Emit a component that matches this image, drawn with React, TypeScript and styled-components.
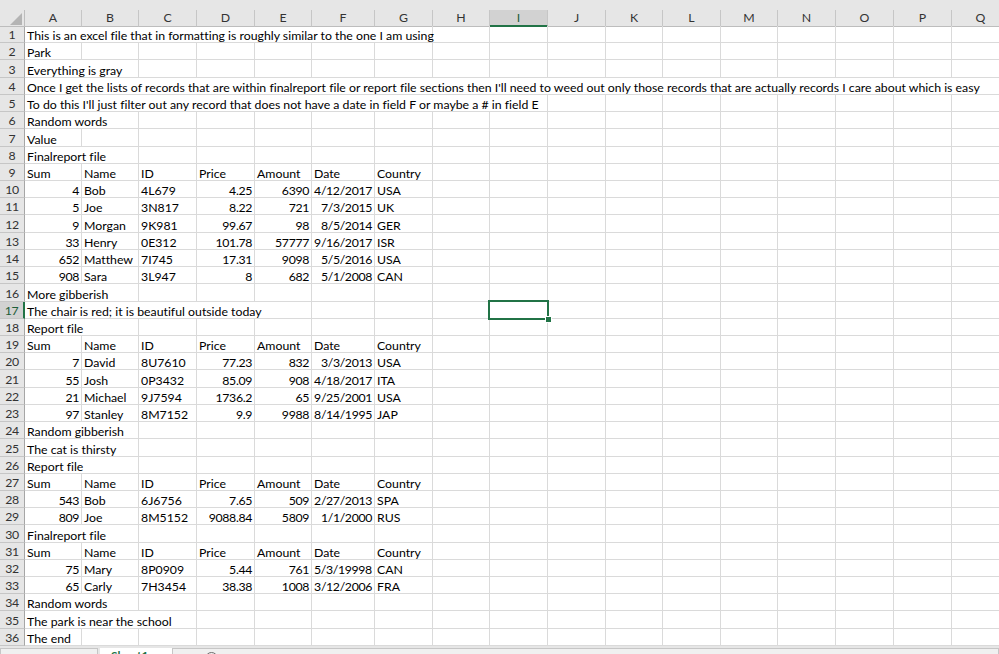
import React from 'react';
import styled, { createGlobalStyle } from 'styled-components';

const COL_W = [57, 57, 58, 58, 57, 63, 58, 57, 58, 58, 57, 58, 57, 58, 58, 58, 58];
const LETTERS = 'ABCDEFGHIJKLMNOPQ'.split('');
const TEMPLATE = `25px ${COL_W.map((w) => `${w}px`).join(' ')}`;
const GRID = '#dadada';
const HEAD_LINE = '#c6c6c6';
const GREEN = '#217346';
const FONT = `Lato, "Noto Sans", sans-serif`;
const ROW_H = 17.22;
const SEL_COL = 8;
const SEL_ROW = 17;

type CellData = { c: number; t: string; r?: boolean; s?: number };

const text = (t: string, s = 1): CellData[] => [{ c: 0, t, s }];
const heads = (): CellData[] =>
  ['Sum', 'Name', 'ID', 'Price', 'Amount', 'Date', 'Country'].map((t, c) => ({ c, t }));
const rec = (
  sum: string,
  name: string,
  id: string,
  price: string,
  amount: string,
  date: string,
  country: string,
  dateIsText = false
): CellData[] => [
  { c: 0, t: sum, r: true },
  { c: 1, t: name },
  { c: 2, t: id },
  { c: 3, t: price, r: true },
  { c: 4, t: amount, r: true },
  { c: 5, t: date, r: !dateIsText },
  { c: 6, t: country },
];

const ROWS: CellData[][] = [
  text('This is an excel file that in formatting is roughly similar to the one I am using', 7),
  text('Park'),
  text('Everything is gray', 2),
  text(
    "Once I get the lists of records that are within finalreport file or report file sections then I'll need to weed out only those records that are actually records I care about which is easy",
    17
  ),
  text("To do this I'll just filter out any record that does not have a date in field F or maybe a # in field E", 9),
  text('Random words', 2),
  text('Value'),
  text('Finalreport file', 2),
  heads(),
  rec('4', 'Bob', '4L679', '4.25', '6390', '4/12/2017', 'USA'),
  rec('5', 'Joe', '3N817', '8.22', '721', '7/3/2015', 'UK'),
  rec('9', 'Morgan', '9K981', '99.67', '98', '8/5/2014', 'GER'),
  rec('33', 'Henry', '0E312', '101.78', '57777', '9/16/2017', 'ISR'),
  rec('652', 'Matthew', '7I745', '17.31', '9098', '5/5/2016', 'USA'),
  rec('908', 'Sara', '3L947', '8', '682', '5/1/2008', 'CAN'),
  text('More gibberish', 2),
  text('The chair is red; it is beautiful outside today', 5),
  text('Report file', 2),
  heads(),
  rec('7', 'David', '8U7610', '77.23', '832', '3/3/2013', 'USA'),
  rec('55', 'Josh', '0P3432', '85.09', '908', '4/18/2017', 'ITA'),
  rec('21', 'Michael', '9J7594', '1736.2', '65', '9/25/2001', 'USA'),
  rec('97', 'Stanley', '8M7152', '9.9', '9988', '8/14/1995', 'JAP'),
  text('Random gibberish', 2),
  text('The cat is thirsty', 2),
  text('Report file', 2),
  heads(),
  rec('543', 'Bob', '6J6756', '7.65', '509', '2/27/2013', 'SPA'),
  rec('809', 'Joe', '8M5152', '9088.84', '5809', '1/1/2000', 'RUS'),
  text('Finalreport file', 2),
  heads(),
  rec('75', 'Mary', '8P0909', '5.44', '761', '5/3/19998', 'CAN', true),
  rec('65', 'Carly', '7H3454', '38.38', '1008', '3/12/2006', 'FRA'),
  text('Random words', 2),
  text('The park is near the school', 3),
  text('The end'),
];

const GlobalStyle = createGlobalStyle`
  html, body { margin: 0; padding: 0; background: #ffffff; overflow: hidden; }
  #root { width: 999px; height: 654px; }
`;

const Sheet = styled.div`
  width: 999px;
  height: 654px;
  overflow: hidden;
  display: flex;
  flex-direction: column;
  background: #ffffff;
  font-family: ${FONT};
  font-size: 12.3px;
  font-variant-ligatures: none;
  color: #000000;
`;

const TopStrip = styled.div`
  height: 10px;
  flex: none;
  background: #e6e6e6;
`;

const HeaderRow = styled.div`
  display: grid;
  grid-template-columns: ${TEMPLATE};
  height: 16px;
  flex: none;
  background: #e6e6e6;
`;

const Corner = styled.div`
  position: relative;
  border-right: 1px solid #bdbdbd;
  border-bottom: 1px solid #bdbdbd;
  box-sizing: border-box;
  display: flex;
  align-items: flex-end;
  justify-content: flex-end;
  padding: 0 2px 1px 0;
`;

const ColHead = styled.div<{ $sel: boolean }>`
  box-sizing: border-box;
  display: flex;
  align-items: center;
  justify-content: center;
  border-right: 1px solid ${HEAD_LINE};
  border-bottom: ${(p) => (p.$sel ? `2px solid ${GREEN}` : '1px solid #bdbdbd')};
  background: ${(p) => (p.$sel ? '#d2d2d2' : '#e6e6e6')};
  color: ${(p) => (p.$sel ? '#1d5e38' : '#333333')};
  font-size: 12.3px;
  line-height: 14px;
  padding-top: ${(p) => (p.$sel ? '1px' : '0')};
`;

const Row = styled.div<{ $h: number }>`
  display: grid;
  grid-template-columns: ${TEMPLATE};
  height: ${(p) => p.$h}px;
  flex: none;
`;

const RowHead = styled.div<{ $sel: boolean }>`
  box-sizing: border-box;
  display: flex;
  align-items: flex-end;
  justify-content: center;
  background: ${(p) => (p.$sel ? '#d2d2d2' : '#e6e6e6')};
  border-right: ${(p) => (p.$sel ? `2px solid ${GREEN}` : '1px solid #a6a6a6')};
  border-bottom: 1px solid ${HEAD_LINE};
  color: ${(p) => (p.$sel ? '#1d5e38' : '#333333')};
  line-height: 12px;
  padding-bottom: 1px;
  letter-spacing: -0.3px;
`;

const Cell = styled.div<{ $right: boolean; $span: number; $num: boolean }>`
  position: relative;
  grid-column: span ${(p) => p.$span};
  box-sizing: border-box;
  border-right: 1px solid ${GRID};
  border-bottom: 1px solid ${GRID};
  display: flex;
  align-items: flex-end;
  justify-content: ${(p) => (p.$right ? 'flex-end' : 'flex-start')};
  padding: 0 ${(p) => (p.$right ? '2px' : '0')} 0 ${(p) => (p.$right ? '0' : '2px')};
  white-space: nowrap;
  line-height: 12px;
  letter-spacing: ${(p) => (p.$num ? '-0.35px' : 'normal')};
  min-width: 0;
`;

const Selection = styled.div`
  position: absolute;
  left: -2px;
  top: -2px;
  right: -2px;
  bottom: -2px;
  border: 2px solid ${GREEN};
  z-index: 2;
  pointer-events: none;
`;

const FillHandle = styled.div`
  position: absolute;
  right: -5px;
  bottom: -5px;
  width: 5px;
  height: 5px;
  background: ${GREEN};
  border: 1px solid #ffffff;
`;

const TabBar = styled.div`
  flex: none;
  height: 30px;
  display: flex;
  align-items: flex-start;
  background: #e6e6e6;
  padding-top: 2px;
  box-sizing: border-box;
`;

const NavArea = styled.div`
  width: 98px;
  height: 26px;
  box-sizing: border-box;
  border: 1px solid #c6c6c6;
  background: #f0f0f0;
  margin-right: 2px;
`;

const SheetTab = styled.div`
  width: 72px;
  height: 26px;
  box-sizing: border-box;
  background: #ffffff;
  color: ${GREEN};
  font-weight: 700;
  font-size: 12px;
  padding: 1px 0 0 11px;
  line-height: 14px;
`;

const AddArea = styled.div`
  flex: 1;
  height: 26px;
  box-sizing: border-box;
  border: 1px solid #c6c6c6;
  background: #f0f0f0;
  padding: 3px 0 0 32px;
`;

const PlusCircle = styled.div`
  width: 13px;
  height: 13px;
  border-radius: 50%;
  border: 1px solid #6d6d6d;
  box-sizing: border-box;
`;

const rowHeights = (): number[] => {
  const hs: number[] = [];
  for (let i = 0; i < 36; i++) {
    hs.push(Math.round((i + 1) * ROW_H) - Math.round(i * ROW_H));
  }
  return hs;
};

const isNumeric = (t: string) => /^[\d./]+$/.test(t);

const renderCells = (cells: CellData[], rowNo: number) => {
  const out: React.ReactNode[] = [];
  let c = 0;
  while (c < LETTERS.length) {
    const cell = cells.find((x) => x.c === c);
    const span = cell?.s ?? 1;
    const sel = rowNo === SEL_ROW && c === SEL_COL;
    out.push(
      <Cell key={c} $right={!!cell?.r} $span={span} $num={!!cell && isNumeric(cell.t)}>
        {cell ? cell.t : ''}
        {sel && (
          <Selection>
            <FillHandle />
          </Selection>
        )}
      </Cell>
    );
    c += span;
  }
  return out;
};

export default function App() {
  const hs = rowHeights();
  return (
    <>
      <GlobalStyle />
      <Sheet>
        <TopStrip />
        <HeaderRow>
          <Corner>
            <svg width="12" height="12" viewBox="0 0 12 12">
              <polygon points="0,12 12,12 12,0" fill="#b4b4b4" />
            </svg>
          </Corner>
          {LETTERS.map((l, i) => (
            <ColHead key={l} $sel={i === SEL_COL}>
              {l}
            </ColHead>
          ))}
        </HeaderRow>
        {ROWS.map((cells, i) => (
          <Row key={i} $h={hs[i]}>
            <RowHead $sel={i + 1 === SEL_ROW}>{i + 1}</RowHead>
            {renderCells(cells, i + 1)}
          </Row>
        ))}
        <TabBar>
          <NavArea />
          <SheetTab>Sheet1</SheetTab>
          <AddArea>
            <PlusCircle />
          </AddArea>
        </TabBar>
      </Sheet>
    </>
  );
}
